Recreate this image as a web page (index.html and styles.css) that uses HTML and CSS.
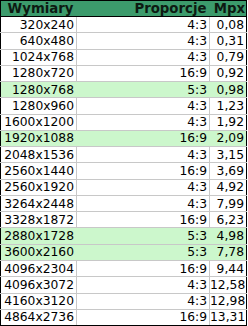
FILE: index.html
```html
<!DOCTYPE html>
<html lang="pl">
<head>
<meta charset="utf-8">
<link rel="stylesheet" href="styles.css">
</head>
<body>
<table class="res">
<colgroup><col class="c1"><col class="c2"><col class="c3"></colgroup>
<thead>
<tr><th>Wymiary</th><th>Proporcje</th><th>Mpx</th></tr>
</thead>
<tbody>
<tr><td>320x240</td><td>4:3</td><td>0,08</td></tr>
<tr><td>640x480</td><td>4:3</td><td>0,31</td></tr>
<tr><td>1024x768</td><td>4:3</td><td>0,79</td></tr>
<tr><td>1280x720</td><td>16:9</td><td>0,92</td></tr>
<tr class="hl"><td>1280x768</td><td>5:3</td><td>0,98</td></tr>
<tr><td>1280x960</td><td>4:3</td><td>1,23</td></tr>
<tr><td>1600x1200</td><td>4:3</td><td>1,92</td></tr>
<tr class="hl"><td>1920x1088</td><td>16:9</td><td>2,09</td></tr>
<tr><td>2048x1536</td><td>4:3</td><td>3,15</td></tr>
<tr><td>2560x1440</td><td>16:9</td><td>3,69</td></tr>
<tr><td>2560x1920</td><td>4:3</td><td>4,92</td></tr>
<tr><td>3264x2448</td><td>4:3</td><td>7,99</td></tr>
<tr><td>3328x1872</td><td>16:9</td><td>6,23</td></tr>
<tr class="hl"><td>2880x1728</td><td>5:3</td><td>4,98</td></tr>
<tr class="hl"><td>3600x2160</td><td>5:3</td><td>7,78</td></tr>
<tr><td>4096x2304</td><td>16:9</td><td>9,44</td></tr>
<tr><td>4096x3072</td><td>4:3</td><td>12,58</td></tr>
<tr><td>4160x3120</td><td>4:3</td><td>12,98</td></tr>
<tr><td>4864x2736</td><td>16:9</td><td>13,31</td></tr>
</tbody>
</table>
</body>
</html>
```
FILE: styles.css
```css
html, body {
  margin: 0;
  padding: 0;
  background: #fff;
}
.res {
  border-collapse: collapse;
  table-layout: fixed;
  width: 247px;
  font-family: "DejaVu Sans", sans-serif;
  font-size: 12.3px;
  color: #000;
  border: 1px solid #000;
}
.c1 { width: 76px; }
.c2 { width: 133px; }
.c3 { width: 37px; }
.res th, .res td {
  padding: 0 2px 0 0;
  text-align: right;
  white-space: nowrap;
  line-height: 14px;
  overflow: hidden;
}
.res thead tr {
  background: #3c9b6c;
  height: 16px;
}
.res th {
  font-weight: bold;
  font-size: 13.3px;
  color: #0d1a12;
  border-bottom: 1px solid #000;
  padding-right: 3px;
}
.res th:last-child {
  padding-right: 1px;
}
.res tbody tr {
  height: 16.27px;
}
.res td {
  border: 1px solid #c8c8c8;
}
.res td:first-child { border-left: 1px solid #000; }
.res td:last-child { border-right: 1px solid #000; }
.res tbody tr:last-child td { border-bottom: 1px solid #000; }
.res tr.hl td {
  background: #ccf7cc;
  border-left-color: #ccf7cc;
  border-right-color: #ccf7cc;
}
.res tr.hl td:first-child { border-left-color: #000; }
.res tr.hl td:last-child { border-right-color: #000; }
```
